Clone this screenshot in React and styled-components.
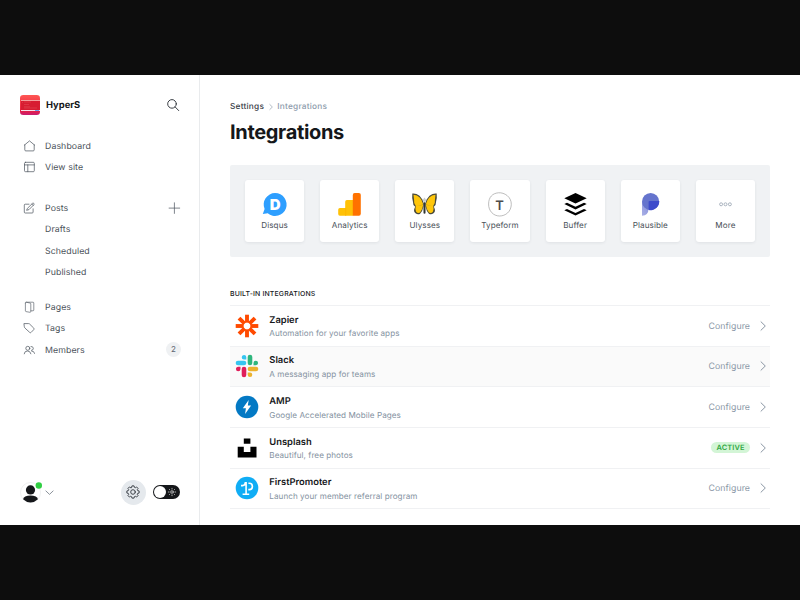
import React from "react";
import styled, { createGlobalStyle } from "styled-components";

const Global = createGlobalStyle`
  * { box-sizing: border-box; }
  body { margin: 0; background: #0d0d0d; font-family: Inter, "Liberation Sans", sans-serif; text-rendering: geometricPrecision; }
  svg { display: block; flex: none; overflow: visible; }
`;

const Screen = styled.div`
  width: 800px;
  height: 600px;
  padding: 75px 0;
  background: #0d0d0d;
  overflow: hidden;
`;
const AppWindow = styled.div`
  display: flex;
  height: 450px;
  background: #fff;
`;

/* Sidebar */
const Sidebar = styled.aside`
  width: 200px;
  flex: none;
  display: flex;
  flex-direction: column;
  padding: 20px 0;
  border-right: 1px solid #e9ebed;
`;
const SiteHeader = styled.header`
  display: flex;
  align-items: center;
  height: 20px;
  padding: 0 20px;
`;
const SiteName = styled.strong`
  flex: 1;
  margin-left: 6px;
  padding-top: 2px;
  font-size: 9.4px;
  font-weight: 700;
  line-height: 20px;
  color: #15171a;
`;
const Nav = styled.nav`
  margin-top: 20px;
`;
const NavGroup = styled.div`
  margin-bottom: ${(p) => p.$gap || 0}px;
`;
const NavItem = styled.a`
  display: flex;
  align-items: center;
  height: 21.25px;
  padding: 0 19px 0 23px;
  font-size: 8.75px;
  letter-spacing: 0.09px;
  color: #4a5159;
`;
const IconSlot = styled.span`
  width: 12px;
  margin-right: 10px;
`;
const NavLabel = styled.span`
  flex: 1;
  padding-top: 2px;
`;
const Count = styled.span`
  width: 15px;
  height: 15px;
  margin-right: -1px;
  border-radius: 8px;
  background: #eff1f3;
  color: #5d6671;
  font-size: 8px;
  line-height: 15.5px;
  text-align: center;
`;
const SidebarFooter = styled.footer`
  display: flex;
  align-items: center;
  height: 25px;
  margin-top: auto;
  margin-bottom: 0.4px;
  padding: 0 19.4px 0 20px;
`;
const Avatar = styled.span`
  margin-right: 4px;
`;
const GearButton = styled.span`
  display: flex;
  align-items: center;
  justify-content: center;
  width: 25px;
  height: 25px;
  margin: 0 7px 0 auto;
  border-radius: 50%;
  background: #e5e9ed;
`;
const Toggle = styled.span`
  display: flex;
  align-items: center;
  justify-content: space-between;
  width: 27px;
  height: 14px;
  padding: 0 4px 0 1px;
  border-radius: 7px;
  background: #15171a;
`;
const Knob = styled.span`
  width: 12px;
  height: 12px;
  border-radius: 50%;
  background: #fff;
`;

/* Content */
const Content = styled.main`
  flex: 1;
  padding: 25.5px 30px 0;
`;
const Breadcrumb = styled.div`
  display: flex;
  align-items: center;
  height: 12px;
  font-size: 8.3px;
  font-weight: 500;
  letter-spacing: 0.22px;
  color: #394047;
`;
const Crumb = styled.span`
  margin-left: 3.6px;
  color: #8e9cac;
`;
const Title = styled.h1`
  margin: 4.5px 0 0;
  font-size: 20px;
  font-weight: 700;
  line-height: 30px;
  letter-spacing: -0.33px;
  color: #15171a;
`;
const Tiles = styled.section`
  display: grid;
  grid-template-columns: repeat(7, 1fr);
  gap: 16px;
  height: 92.5px;
  margin-top: 17.5px;
  padding: 15px;
  border-radius: 2px;
  background: #f0f2f4;
`;
const Tile = styled.div`
  display: flex;
  flex-direction: column;
  align-items: center;
  padding-top: 12px;
  border-radius: 3px;
  background: #fff;
  box-shadow: 0 1px 3px rgba(50, 65, 80, 0.09);
`;
const TileLabel = styled.span`
  margin-top: 2.5px;
  font-size: 8.1px;
  line-height: 12px;
  letter-spacing: 0.1px;
  color: #4a5159;
`;
const SectionTitle = styled.h2`
  margin: 30.5px 0 5.5px;
  font-size: 6.9px;
  font-weight: 500;
  line-height: 12px;
  letter-spacing: 0.17px;
  text-transform: uppercase;
  color: #15171a;
`;
const List = styled.div`
  border-bottom: 1px solid #f0f1f3;
`;
const Row = styled.div`
  display: flex;
  align-items: center;
  height: 40.65px;
  padding: 0 2px 0 5px;
  border-top: 1px solid #f0f1f3;
  background: ${(p) => (p.$highlighted ? "#fafafa" : "#fff")};
`;
const RowText = styled.div`
  flex: 1;
  margin-left: 10.3px;
`;
const RowTitle = styled.h3`
  margin: 1.5px 0 0;
  font-size: 9.4px;
  font-weight: 600;
  line-height: 13px;
  color: #15171a;
`;
const RowNote = styled.p`
  margin: 0.8px 0 0;
  font-size: 8.1px;
  line-height: 12px;
  letter-spacing: 0.06px;
  color: #8492a1;
`;
const Configure = styled.span`
  margin-right: 8px;
  padding-top: 1.8px;
  font-size: 8.75px;
  letter-spacing: 0.06px;
  color: #8b98a7;
`;
const ActiveBadge = styled.span`
  margin-right: 8px;
  height: 11px;
  padding: 0 5.5px;
  border-radius: 6px;
  background: #d3f5d6;
  color: #30a843;
  font-size: 7.4px;
  font-weight: 600;
  line-height: 11.5px;
  letter-spacing: 0.1px;
`;

const Line = ({ size = 12, width = 0.75, color = "#535b64", box = "0 0 12 12", children }) => (
  <svg width={size} height={size} viewBox={box} fill="none" stroke={color} strokeWidth={width} strokeLinecap="round" strokeLinejoin="round">
    {children}
  </svg>
);

const HomeIcon = () => (
  <Line>
    <path d="M1.3 5.2 6.5.9l5.2 4.3M1.8 4.9v5q0 1 1 1h7.4q1 0 1-1v-5" />
  </Line>
);
const SiteIcon = () => (
  <Line>
    <rect x="1.5" y="1.3" width="9.8" height="9.4" rx="1" />
    <path d="M1.5 3.9h9.8M4.8 3.9v6.8" />
  </Line>
);
const PostsIcon = () => (
  <Line>
    <path d="M6 2.2H2.2q-.9 0-.9.9v7q0 .9.9.9h7q.9 0 .9-.9V6.8M4.6 6.2l4.9-4.9q.7-.5 1.3.1t.1 1.3L6 7.6l-2 .6zM8.8 2l1.4 1.4" />
  </Line>
);
const PagesIcon = () => (
  <Line width={0.65}>
    <path d="M2.4 2q0-.8.8-.8H10q.8 0 .8.8v7q0 .8-.8.8H8M3.2 1.2l3.8.8q.8.2.8 1v7.5q0 .8-.8.8L3 10.6q-.6-.2-.6-.8V2" />
  </Line>
);
const TagIcon = () => (
  <Line>
    <path d="M1.3 1.6h4.4q.5 0 .9.4l4.2 4.2q.7.7 0 1.4l-2.7 2.8q-.7.7-1.4 0L1.9 6q-.4-.4-.5-.9z" />
  </Line>
);
const MembersIcon = () => (
  <Line>
    <circle cx="4.8" cy="4.3" r="2" />
    <path d="M1.2 9.8Q1.4 7 4.4 7t3.5 2.8M8 2.5q2-.3 2.3 1.7t-1.8 2.2M8.7 7q2.6 0 2.9 2.4" />
  </Line>
);
const PlusIcon = () => (
  <Line>
    <path d="M6.4.8v10.6M1.1 6.1h10.6" />
  </Line>
);
const SearchIcon = () => (
  <Line width={0.95} color="#30363c">
    <circle cx="5" cy="4.9" r="4.3" />
    <path d="m8.2 8 3.5 3.6" />
  </Line>
);
const Chevron = ({ size = 10, color = "#7d8a98", width = 0.9 }) => (
  <Line size={size} width={width} color={color} box="0 0 10 10">
    <path d="m3 .8 4.3 4.2L3 9.2" />
  </Line>
);
const DownChevron = () => (
  <Line size={9} width={0.95} color="#777f88" box="0 0 10 10">
    <path d="m1 3.3 4 3.8 4-3.8" />
  </Line>
);

const gearPoints = (() => {
  const points = [];
  for (let i = 0; i < 8; i += 1) {
    const center = (i * Math.PI) / 4;
    [[-0.28, 4.9], [-0.17, 6.2], [0.17, 6.2], [0.28, 4.9]].forEach(([offset, radius]) => {
      points.push(`${(7 + radius * Math.sin(center + offset)).toFixed(2)},${(7 - radius * Math.cos(center + offset)).toFixed(2)}`);
    });
  }
  return points.join(" ");
})();
const GearIcon = () => (
  <Line size={14} width={0.9} color="#30363c" box="0 0 14 14">
    <polygon points={gearPoints} />
    <circle cx="7" cy="7" r="2.3" />
  </Line>
);
const SunIcon = () => (
  <Line size={8} width={0.7} color="#e8e8e8" box="0 0 8 8">
    <circle cx="4" cy="4" r="1.3" />
    <path d="M4 .3v.8M4 6.9v.8M.3 4h.8M6.9 4h.8M1.4 1.4l.5.5M6.1 6.1l.5.5M6.6 1.4l-.5.5M1.9 6.1l-.5.5" />
  </Line>
);

const SiteLogo = () => (
  <svg width="20" height="20" viewBox="0 0 20 20">
    <defs>
      <linearGradient id="siteTop" x2="0" y2="1">
        <stop stopColor="#ff5754" />
        <stop offset=".75" stopColor="#e91f3e" />
        <stop offset="1" stopColor="#c81c70" />
      </linearGradient>
      <clipPath id="siteClip"><rect width="20" height="20" rx="3.3" /></clipPath>
    </defs>
    <g clipPath="url(#siteClip)">
      <path fill="url(#siteTop)" d="M0 0h20v20H0z" />
      <path fill="#d71d31" d="M1 6h19v9H1z" />
      <path fill="#f4a09e" d="M1 4.9h19V6H1z" />
      <path fill="#f5e0ea" d="M1 14.9h19v1.2H1z" />
      <path fill="#699cf0" d="M15 15h4v1h-4z" />
      <path stroke="#e2505a" strokeWidth=".5" d="M4 7h7M2 7.5h1M4 9.5h5M4 11.8h6M4 13h13" />
    </g>
  </svg>
);
const AvatarIcon = () => (
  <svg width="21" height="21" viewBox="0 0 21 21">
    <defs><clipPath id="avatarClip"><circle cx="10.5" cy="10.5" r="10" /></clipPath></defs>
    <circle cx="10.5" cy="10.5" r="10" fill="#fff" stroke="#e8e9eb" strokeWidth=".7" />
    <g clipPath="url(#avatarClip)" fill="#15171a">
      <circle cx="10.5" cy="7.9" r="4.6" />
      <ellipse cx="10.5" cy="17.4" rx="7.4" ry="4" />
    </g>
    <circle cx="18.8" cy="3.5" r="3.2" fill="#30cf43" />
  </svg>
);

const LetterD = styled.text`
  font: 900 15px Inter, sans-serif;
  fill: #fff;
`;
const LetterT = styled.text`
  font: 600 13px Inter, sans-serif;
  fill: #4b4b4b;
`;

const DisqusLogo = () => (
  <svg width="25" height="25" viewBox="0 0 25 25">
    <path fill="#2e9fff" d="M13.1 1a11.5 11.5 0 1 1-7.4 20.3L.8 22l1.8-5A11.5 11.5 0 0 1 13.1 1z" />
    <LetterD x="7.7" y="17.9">D</LetterD>
  </svg>
);
const AnalyticsLogo = () => (
  <svg width="25" height="25" viewBox="0 0 25 25">
    <path fill="#ffc107" d="M1.2 17.7q0-1.7 1.7-1.7h5.3V9.8q0-1.7 1.7-1.7h6.2v15.6H2.9q-1.7 0-1.7-1.7z" />
    <path fill="#fdb600" d="M8.2 16h1v7.7h-1z" />
    <path fill="#ff7200" d="M15.8 3q0-1.9 1.9-1.9h4.2q1.9 0 1.9 1.9v18.7q0 2-1.9 2h-6.1z" />
  </svg>
);
const ButterflyWing = () => (
  <>
    <path fill="#4a4b3c" d="M.3 1.5q3.7-.5 7.2 2.3 3.6 3.4 4.2 8.2l-.2 2.5q-1 5-3.4 7.2-2.3 1.3-4.6-.4-2.3-1.6-1-5l.7-1.5Q.7 13 .9 9.5L.2 6z" />
    <path fill="#ffc60a" d="M1.5 2.7Q9 3 11.3 12.6L3.9 14.2Q1.5 11.5 2.1 8zM3.7 14.2l7.5-1.4q-.6 4.8-3.1 7.8-2.5.9-4-.9-1.2-2-.4-5.5z" />
  </>
);
const UlyssesLogo = () => (
  <svg width="25" height="25" viewBox="0 0 25 25">
    <ButterflyWing />
    <g transform="matrix(-1 0 0 1 25 0)"><ButterflyWing /></g>
    <path fill="#c9cdd0" d="m12.5 5.5 2 2.7-2 2.8-2-2.8z" />
    <path stroke="#303532" strokeWidth="2" strokeLinecap="round" d="M12.5 11.2v9.5" />
  </svg>
);
const TypeformLogo = () => (
  <svg width="25" height="25" viewBox="0 0 25 25">
    <path fill="#fff" stroke="#999" strokeWidth=".65" d="M11.3.8C17.5.2 24.5 5 24.3 12.4S18.5 24 12.5 24 1.5 19 1.6 12 5.5 1.4 11.3.8z" />
    <LetterT x="12.6" y="18.4" textAnchor="middle">T</LetterT>
  </svg>
);
const BufferLogo = () => (
  <svg width="25" height="25" viewBox="0 0 25 25">
    <path d="m12.5 1 11.2 5.2-11.2 5.4L1.3 6.2zM4 10.7l8.5 4 8.5-4 2.7 1.3-11.2 5.4L1.3 12zM4 16.9l8.5 4 8.5-4 2.7 1.3-11.2 5.4-11.2-5.4z" />
  </svg>
);
const PlausibleLogo = () => (
  <svg width="25" height="25" viewBox="0 0 25 25">
    <defs>
      <linearGradient id="stem" x1="0" y1="1" x2="1" y2="0">
        <stop stopColor="#aab1e5" /><stop offset="1" stopColor="#7e89db" />
      </linearGradient>
    </defs>
    <path fill="url(#stem)" d="M4 10v13.8q6.5-.6 6.5-6.8H13V9z" />
    <circle cx="12.6" cy="9.5" r="8.6" fill="#6574cd" />
    <path fill="#3d4bcb" d="M10.6 10q0-1.1 1.1-1.1h9.5a8.6 8.6 0 0 1-10.6 9z" />
  </svg>
);
const MoreIcon = () => (
  <svg width="25" height="25" viewBox="0 0 25 25" fill="none" stroke="#8a97a6" strokeWidth=".7">
    {[8.1, 12.5, 16.9].map((x) => <circle key={x} cx={x} cy="12.3" r="1.5" />)}
  </svg>
);

const ZapierLogo = () => (
  <svg width="24" height="24" viewBox="0 0 24 24" stroke="#ff4a00" strokeWidth="3.9">
    {[0, 45, 90, 135, 180, 225, 270, 315].map((angle) => (
      <path key={angle} d="M12 .7v8" transform={`rotate(${angle} 12 12)`} />
    ))}
  </svg>
);
const SlackLogo = () => (
  <svg width="24" height="24" viewBox="0 0 24 24">
    {[["#36c5f0", 0], ["#2eb67d", 90], ["#ecb22e", 180], ["#e01e5a", 270]].map(([color, angle]) => (
      <g key={color} fill={color} transform={`rotate(${angle} 12 12)`}>
        <rect x=".7" y="6.7" width="10.6" height="4.6" rx="2.3" />
        <path d="M11.3 5.5V3A2.3 2.3 0 1 0 9 5.5z" />
      </g>
    ))}
  </svg>
);
const AmpLogo = () => (
  <svg width="24" height="24" viewBox="0 0 24 24">
    <circle cx="12" cy="12" r="11.3" fill="#0379c4" />
    <path fill="#fff" d="M13.7 4.9 7.8 13.2h3.1L10.1 19l6-8.5h-3.3z" />
  </svg>
);
const UnsplashLogo = () => (
  <svg width="24" height="24" viewBox="0 0 24 24">
    <path d="M8.8 2.6h6.6v5.2H8.8zM2.7 10.8h6.1V16h6.6v-5.2h6.1v10.6H2.7z" />
  </svg>
);
const PromoterLogo = () => (
  <svg width="24" height="24" viewBox="0 0 24 24" fill="none" stroke="#fff" strokeWidth="1.6">
    <circle cx="12" cy="12" r="11.3" fill="#10adf5" stroke="none" />
    <path d="M6 9.6h1.6q2.4-.2 2.7-2.7h.8v11.3M7.6 18.2h6.6M13.4 7.2h.8a3.2 3.2 0 0 1 0 6.4h-.9" />
  </svg>
);

const tiles = [
  ["Disqus", DisqusLogo],
  ["Analytics", AnalyticsLogo],
  ["Ulysses", UlyssesLogo],
  ["Typeform", TypeformLogo],
  ["Buffer", BufferLogo],
  ["Plausible", PlausibleLogo],
  ["More", MoreIcon],
];
const integrations = [
  { name: "Zapier", note: "Automation for your favorite apps", Logo: ZapierLogo },
  { name: "Slack", note: "A messaging app for teams", Logo: SlackLogo, highlighted: true },
  { name: "AMP", note: "Google Accelerated Mobile Pages", Logo: AmpLogo },
  { name: "Unsplash", note: "Beautiful, free photos", Logo: UnsplashLogo, active: true },
  { name: "FirstPromoter", note: "Launch your member referral program", Logo: PromoterLogo },
];

const Item = ({ icon, label, children }) => (
  <NavItem>
    <IconSlot>{icon}</IconSlot>
    <NavLabel>{label}</NavLabel>
    {children}
  </NavItem>
);

export default function App() {
  return (
    <Screen>
      <Global />
      <AppWindow>
        <Sidebar>
          <SiteHeader>
            <SiteLogo />
            <SiteName>HyperS</SiteName>
            <SearchIcon />
          </SiteHeader>
          <Nav>
            <NavGroup $gap={20.1}>
              <Item icon={<HomeIcon />} label="Dashboard" />
              <Item icon={<SiteIcon />} label="View site" />
            </NavGroup>
            <NavGroup $gap={13.8}>
              <Item icon={<PostsIcon />} label="Posts"><PlusIcon /></Item>
              <Item label="Drafts" />
              <Item label="Scheduled" />
              <Item label="Published" />
            </NavGroup>
            <NavGroup>
              <Item icon={<PagesIcon />} label="Pages" />
              <Item icon={<TagIcon />} label="Tags" />
              <Item icon={<MembersIcon />} label="Members"><Count>2</Count></Item>
            </NavGroup>
          </Nav>
          <SidebarFooter>
            <Avatar><AvatarIcon /></Avatar>
            <DownChevron />
            <GearButton><GearIcon /></GearButton>
            <Toggle><Knob /><SunIcon /></Toggle>
          </SidebarFooter>
        </Sidebar>
        <Content>
          <Breadcrumb>
            Settings
            <Crumb><Chevron size={6} width={1.5} color="#aab4be" /></Crumb>
            <Crumb>Integrations</Crumb>
          </Breadcrumb>
          <Title>Integrations</Title>
          <Tiles>
            {tiles.map(([name, Logo]) => (
              <Tile key={name}>
                <Logo />
                <TileLabel>{name}</TileLabel>
              </Tile>
            ))}
          </Tiles>
          <SectionTitle>Built-in integrations</SectionTitle>
          <List>
            {integrations.map(({ name, note, Logo, highlighted, active }) => (
              <Row key={name} $highlighted={highlighted}>
                <Logo />
                <RowText>
                  <RowTitle>{name}</RowTitle>
                  <RowNote>{note}</RowNote>
                </RowText>
                {active ? <ActiveBadge>ACTIVE</ActiveBadge> : <Configure>Configure</Configure>}
                <Chevron />
              </Row>
            ))}
          </List>
        </Content>
      </AppWindow>
    </Screen>
  );
}
